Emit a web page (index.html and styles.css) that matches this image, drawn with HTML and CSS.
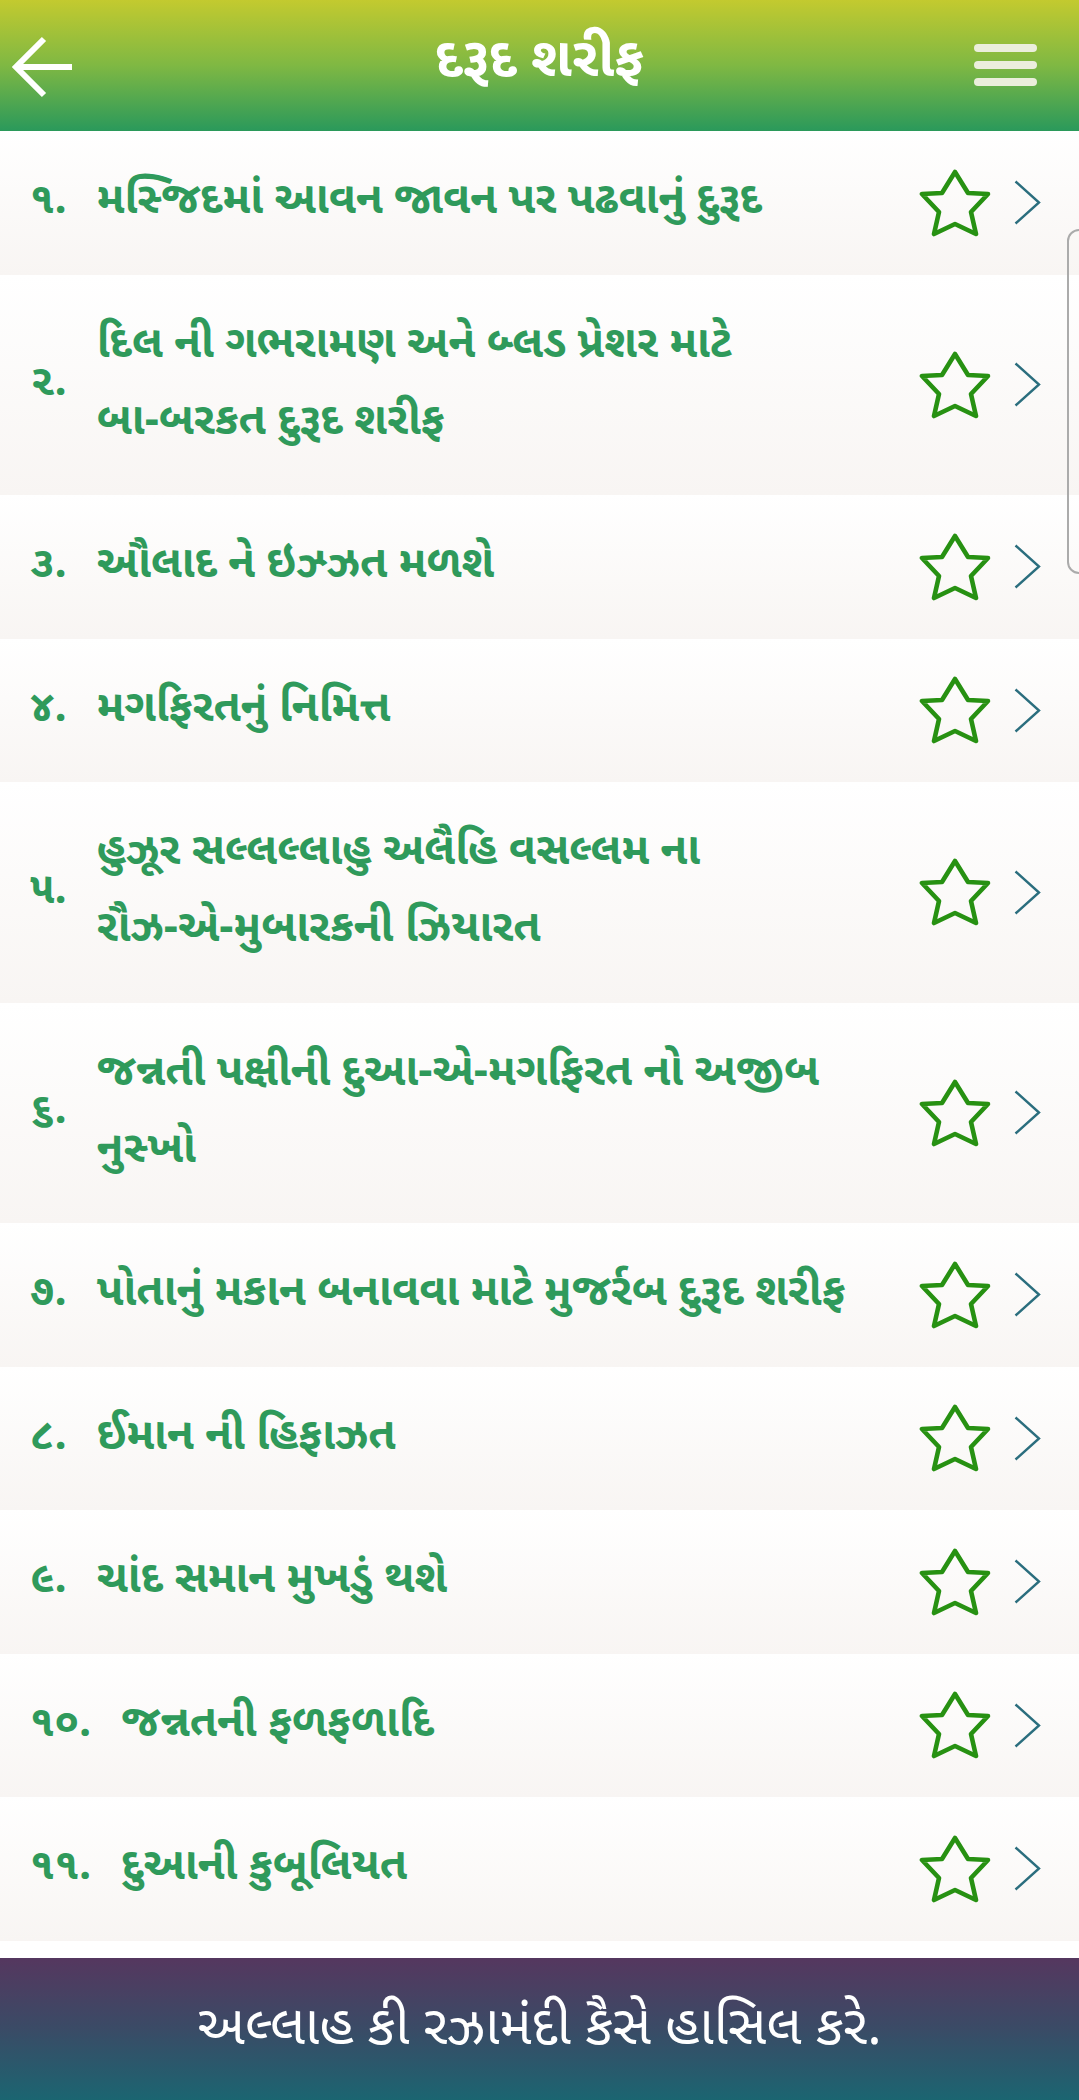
FILE: index.html
```html
<!DOCTYPE html>
<html lang="gu">
<head>
<meta charset="utf-8">
<title>દરૂદ શરીફ</title>
<link rel="stylesheet" href="styles.css">
</head>
<body>
<div class="app">
  <header class="topbar">
    <button class="icon-btn back" aria-label="back">
      <svg width="62" height="62" viewBox="0 0 62 62"><path d="M60 31 H5 M32 3 L4 31 L32 59" fill="none" stroke="#fff" stroke-width="6"/></svg>
    </button>
    <h1 class="title">દરૂદ શરીફ</h1>
    <button class="icon-btn menu" aria-label="menu">
      <span class="bar"></span><span class="bar"></span><span class="bar"></span>
    </button>
  </header>

  <main class="list">
    <div class="row"><span class="num">૧.</span><span class="text">મસ્જિદમાં આવન જાવન પર પઢવાનું દુરૂદ</span><span class="star"><svg width="72" height="70" viewBox="0 0 72 70"><path d="M36 4 L49 25 L69 26 L52 44 L57 66 L36 56 L15 66 L20 44 L3 26 L23 25 Z"/></svg></span><span class="chev"><svg width="27" height="45" viewBox="0 0 27 45"><path d="M1.5 1.5 L25 22.5 L1.5 43.5"/></svg></span></div>
    <div class="row"><span class="num">૨.</span><span class="text">દિલ ની ગભરામણ અને બ્લડ પ્રેશર માટે<br>બા-બરકત દુરૂદ શરીફ</span><span class="star"><svg width="72" height="70" viewBox="0 0 72 70"><path d="M36 4 L49 25 L69 26 L52 44 L57 66 L36 56 L15 66 L20 44 L3 26 L23 25 Z"/></svg></span><span class="chev"><svg width="27" height="45" viewBox="0 0 27 45"><path d="M1.5 1.5 L25 22.5 L1.5 43.5"/></svg></span></div>
    <div class="row"><span class="num">૩.</span><span class="text">ઔલાદ ને ઇઝ્ઝત મળશે</span><span class="star"><svg width="72" height="70" viewBox="0 0 72 70"><path d="M36 4 L49 25 L69 26 L52 44 L57 66 L36 56 L15 66 L20 44 L3 26 L23 25 Z"/></svg></span><span class="chev"><svg width="27" height="45" viewBox="0 0 27 45"><path d="M1.5 1.5 L25 22.5 L1.5 43.5"/></svg></span></div>
    <div class="row"><span class="num">૪.</span><span class="text">મગફિરતનું નિમિત્ત</span><span class="star"><svg width="72" height="70" viewBox="0 0 72 70"><path d="M36 4 L49 25 L69 26 L52 44 L57 66 L36 56 L15 66 L20 44 L3 26 L23 25 Z"/></svg></span><span class="chev"><svg width="27" height="45" viewBox="0 0 27 45"><path d="M1.5 1.5 L25 22.5 L1.5 43.5"/></svg></span></div>
    <div class="row"><span class="num">૫.</span><span class="text">હુઝૂર સલ્લલ્લાહુ અલૈહિ વસલ્લમ ના<br>રૌઝ-એ-મુબારકની ઝિયારત</span><span class="star"><svg width="72" height="70" viewBox="0 0 72 70"><path d="M36 4 L49 25 L69 26 L52 44 L57 66 L36 56 L15 66 L20 44 L3 26 L23 25 Z"/></svg></span><span class="chev"><svg width="27" height="45" viewBox="0 0 27 45"><path d="M1.5 1.5 L25 22.5 L1.5 43.5"/></svg></span></div>
    <div class="row"><span class="num">૬.</span><span class="text">જન્નતી પક્ષીની દુઆ-એ-મગફિરત નો અજીબ<br>નુસ્ખો</span><span class="star"><svg width="72" height="70" viewBox="0 0 72 70"><path d="M36 4 L49 25 L69 26 L52 44 L57 66 L36 56 L15 66 L20 44 L3 26 L23 25 Z"/></svg></span><span class="chev"><svg width="27" height="45" viewBox="0 0 27 45"><path d="M1.5 1.5 L25 22.5 L1.5 43.5"/></svg></span></div>
    <div class="row"><span class="num">૭.</span><span class="text">પોતાનું મકાન બનાવવા માટે મુજર્રબ દુરૂદ શરીફ</span><span class="star"><svg width="72" height="70" viewBox="0 0 72 70"><path d="M36 4 L49 25 L69 26 L52 44 L57 66 L36 56 L15 66 L20 44 L3 26 L23 25 Z"/></svg></span><span class="chev"><svg width="27" height="45" viewBox="0 0 27 45"><path d="M1.5 1.5 L25 22.5 L1.5 43.5"/></svg></span></div>
    <div class="row"><span class="num">૮.</span><span class="text">ઈમાન ની હિફાઝત</span><span class="star"><svg width="72" height="70" viewBox="0 0 72 70"><path d="M36 4 L49 25 L69 26 L52 44 L57 66 L36 56 L15 66 L20 44 L3 26 L23 25 Z"/></svg></span><span class="chev"><svg width="27" height="45" viewBox="0 0 27 45"><path d="M1.5 1.5 L25 22.5 L1.5 43.5"/></svg></span></div>
    <div class="row"><span class="num">૯.</span><span class="text">ચાંદ સમાન મુખડું થશે</span><span class="star"><svg width="72" height="70" viewBox="0 0 72 70"><path d="M36 4 L49 25 L69 26 L52 44 L57 66 L36 56 L15 66 L20 44 L3 26 L23 25 Z"/></svg></span><span class="chev"><svg width="27" height="45" viewBox="0 0 27 45"><path d="M1.5 1.5 L25 22.5 L1.5 43.5"/></svg></span></div>
    <div class="row"><span class="num">૧૦.</span><span class="text">જન્નતની ફળફળાદિ</span><span class="star"><svg width="72" height="70" viewBox="0 0 72 70"><path d="M36 4 L49 25 L69 26 L52 44 L57 66 L36 56 L15 66 L20 44 L3 26 L23 25 Z"/></svg></span><span class="chev"><svg width="27" height="45" viewBox="0 0 27 45"><path d="M1.5 1.5 L25 22.5 L1.5 43.5"/></svg></span></div>
    <div class="row"><span class="num">૧૧.</span><span class="text">દુઆની કુબૂલિયત</span><span class="star"><svg width="72" height="70" viewBox="0 0 72 70"><path d="M36 4 L49 25 L69 26 L52 44 L57 66 L36 56 L15 66 L20 44 L3 26 L23 25 Z"/></svg></span><span class="chev"><svg width="27" height="45" viewBox="0 0 27 45"><path d="M1.5 1.5 L25 22.5 L1.5 43.5"/></svg></span></div>
  </main>

  <footer class="bottombar">અલ્લાહ કી રઝામંદી કૈસે હાસિલ કરે.</footer>

  <div class="scroll-thumb"></div>
</div>
</body>
</html>
```
FILE: styles.css
```css
* { box-sizing: border-box; }
html, body { margin: 0; padding: 0; }
body {
  width: 1079px;
  height: 2100px;
  overflow: hidden;
  background: #fff;
  font-family: "Noto Sans Gujarati", "Lohit Gujarati", "Shruti", "Noto Sans", sans-serif;
}
.app {
  position: relative;
  display: flex;
  flex-direction: column;
  height: 2100px;
  overflow: hidden;
}
.topbar {
  height: 131px;
  flex: none;
  display: grid;
  grid-template-columns: 1fr auto 1fr;
  align-items: center;
  padding: 0 42px 0 12px;
  background: linear-gradient(to bottom, #c3ca2f 0%, #7fb843 50%, #2a995b 100%);
}
.icon-btn {
  background: none;
  border: 0;
  padding: 0;
  margin: 0;
  display: flex;
}
.back { width: 62px; height: 62px; margin-top: 2px; justify-self: start; }
.title {
  margin: 0;
  color: #fff;
  font-size: 55px;
  font-weight: 700;
  line-height: 1;
  margin-top: -6px;
  margin-left: 30px;
}
.menu {
  width: 63px;
  flex-direction: column;
  gap: 9px;
  margin-top: -2px;
  justify-self: end;
}
.menu .bar {
  display: block;
  height: 8px;
  border-radius: 4px;
  background: #ebeedc;
}
.list {
  flex: 1;
  overflow: hidden;
}
.row {
  display: flex;
  align-items: center;
  padding-left: 30px;
  padding-right: 38px;
  background: linear-gradient(to bottom, #ffffff 0%, #f8f5f3 100%);
}
.num {
  flex: none;
  color: #2f9a5b;
  font-size: 43px;
  font-weight: 700;
  margin-right: 30px;
  line-height: 77px;
}
.text {
  flex: 1;
  color: #2f9a5b;
  font-size: 44px;
  font-weight: 700;
  line-height: 77px;
  padding: 33.25px 0;
}
.star {
  flex: none;
  display: flex;
  margin-left: 20px;
}
.star path {
  fill: none;
  stroke: #279112;
  stroke-width: 4.6;
  stroke-linejoin: round;
}
.chev {
  flex: none;
  display: flex;
  margin-left: 23px;
}
.chev path {
  fill: none;
  stroke: #2b6e7e;
  stroke-width: 2.4;
}
.bottombar {
  flex: none;
  height: 142px;
  display: flex;
  align-items: center;
  justify-content: center;
  padding-top: 4px;
  color: #fff;
  font-size: 54px;
  font-weight: 400;
  background: linear-gradient(to bottom, #55375f 0%, #3a4b66 50%, #1b6571 100%);
}
.scroll-thumb {
  position: absolute;
  left: 1067px;
  top: 229px;
  width: 30px;
  height: 345px;
  border: 2px solid #ababab;
  border-radius: 12px;
}
```
